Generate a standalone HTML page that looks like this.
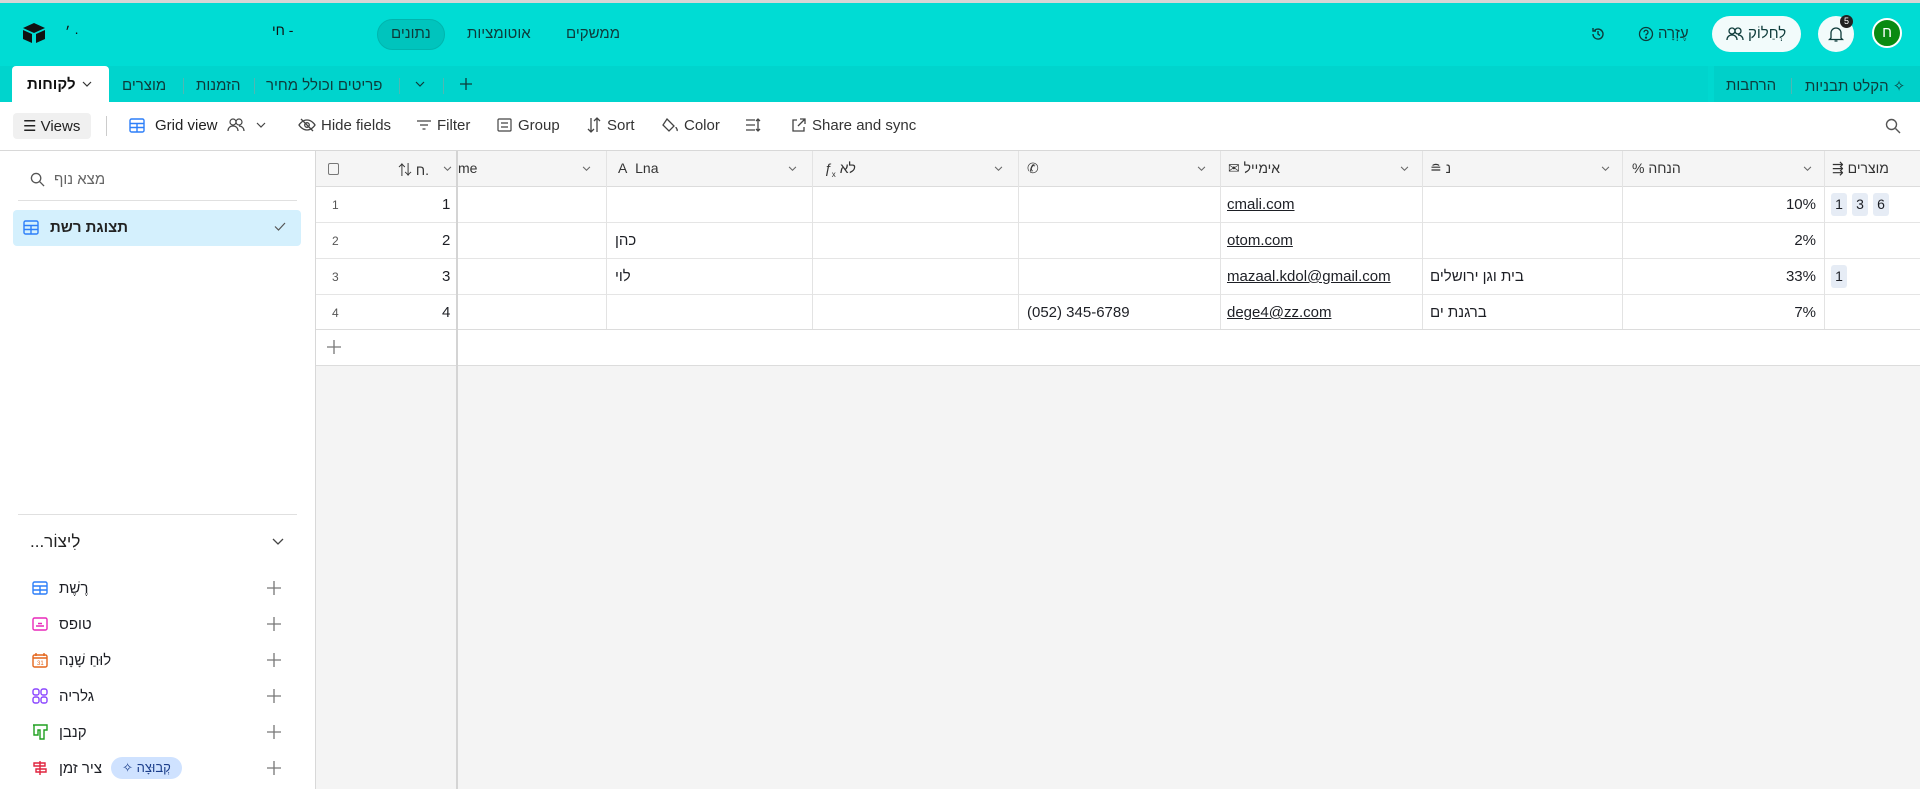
<!DOCTYPE html>
<html><head><meta charset="utf-8">
<style>
*{box-sizing:border-box;margin:0;padding:0}
body{width:1920px;height:789px;overflow:hidden;position:relative;background:#fff;font-family:"Liberation Sans","Noto Sans CJK SC",sans-serif;color:#1d1f25;font-size:15px}
.a{position:absolute;white-space:nowrap}
.top{left:0;top:0;width:1920px;height:66px;background:#00dcd4;border-top:3px solid #d6d6d6}
.tabs{left:0;top:66px;width:1920px;height:36px;background:#00d4cd}
.vl{position:absolute;width:1px;background:#dcdcdc}
.hl{position:absolute;height:1px;background:#dcdcdc}
.tb{top:117px;font-size:15px;color:#333}
.hd{top:160px;font-size:14px;color:#333}
.cell{font-size:15px}
.r{text-align:right;width:60px}
svg{position:absolute}
</style></head><body>
<div class="a top"></div>
<div class="a tabs"></div>
<div class="a" style="left:1708px;top:66px;width:212px;height:36px;background:#00d0c9;border-left:6px solid #00d8d0"></div>
<svg style="left:22px;top:22px" width="24" height="22" viewBox="0 0 24 22"><path d="M12 1L23 6 12 11 1 6Z" fill="#111"/><path d="M1 8L10 12V21L1 17Z" fill="#111"/><path d="M14 12L23 8V17L14 21Z" fill="#111"/></svg>
<div class="a" style="left:65px;top:24px;color:#111;font-size:14px">׳ ·</div>
<div class="a" style="left:272px;top:22px;color:#111;font-size:14px">חי -</div>
<div class="a" style="left:377px;top:19px;width:68px;height:31px;border-radius:16px;background:#00c4bd;border:1px solid #00b5ae"></div>
<div class="a" style="left:391px;top:25px;font-size:15px;color:#0d3b3a">נתונים</div>
<div class="a" style="left:467px;top:25px;font-size:15px;color:#0d3b3a">אוטומציות</div>
<div class="a" style="left:566px;top:25px;font-size:15px;color:#0d3b3a">ממשקים</div>
<svg style="left:1590px;top:26px" width="16" height="16" viewBox="0 0 16 16" fill="none" stroke="#0d3b3a" stroke-width="1.4"><path d="M3 8a5 5 0 1 0 1.5-3.5M3 2v3h3M8 5v3l2 1.5"/></svg>
<svg style="left:1638px;top:26px" width="16" height="16" viewBox="0 0 16 16" fill="none" stroke="#0d3b3a" stroke-width="1.3"><circle cx="8" cy="8" r="6.5"/><path d="M6 6.3a2 2 0 1 1 2.5 1.9c-.5.2-.5.6-.5 1.3"/><circle cx="8" cy="11.6" r=".5" fill="#0d3b3a"/></svg>
<div class="a" style="left:1658px;top:25px;font-size:15px;color:#0d3b3a">עֶזְרָה</div>
<div class="a" style="left:1712px;top:16px;width:89px;height:36px;border-radius:18px;background:#f2fbfb"></div>
<svg style="left:1726px;top:27px" width="18" height="14" viewBox="0 0 18 14" fill="none" stroke="#0d3b3a" stroke-width="1.3"><circle cx="6" cy="4" r="3"/><circle cx="12" cy="4" r="3"/><path d="M1 13c0-3 2-5 5-5s5 2 5 5M12 8c3 0 5 2 5 5"/></svg>
<div class="a" style="left:1748px;top:25px;font-size:15px;color:#0d3b3a">לְחַלוֹק</div>
<div class="a" style="left:1818px;top:16px;width:36px;height:36px;border-radius:18px;background:#f2fbfb"></div>
<svg style="left:1828px;top:25px" width="16" height="18" viewBox="0 0 16 18" fill="none" stroke="#0d3b3a" stroke-width="1.3"><path d="M3 13V8a5 5 0 0 1 10 0v5l1.5 1.5h-13ZM6.5 16h3"/></svg>
<div class="a" style="left:1840px;top:15px;width:13px;height:13px;border-radius:7px;background:#222;color:#fff;font-size:9px;text-align:center;line-height:13px">5</div>
<div class="a" style="left:1872px;top:18px;width:30px;height:30px;border-radius:15px;background:#0a8a12;border:2px solid #fff;color:#fff;font-size:15px;text-align:center;line-height:26px">ח</div>
<div class="a" style="left:12px;top:66px;width:97px;height:36px;background:#fff;border-radius:4px 4px 0 0"></div>
<div class="a" style="left:27px;top:76px;font-size:15px;font-weight:bold;color:#111">לקוחות</div>
<svg style="left:82px;top:81px" width="10" height="7" viewBox="0 0 10 7" fill="none" stroke="#333" stroke-width="1.2"><path d="M1 1l4 4 4-4"/></svg>
<div class="a" style="left:122px;top:77px;font-size:15px;color:#0d3b3a">מוצרים</div>
<div class="a" style="left:183px;top:78px;width:1px;height:16px;background:#4fb8b3"></div>
<div class="a" style="left:196px;top:77px;font-size:15px;color:#0d3b3a">הזמנות</div>
<div class="a" style="left:254px;top:78px;width:1px;height:16px;background:#4fb8b3"></div>
<div class="a" style="left:266px;top:77px;font-size:15px;color:#0d3b3a">פריטים וכולל מחיר</div>
<div class="a" style="left:399px;top:78px;width:1px;height:16px;background:#4fb8b3"></div>
<svg style="left:415px;top:81px" width="10" height="7" viewBox="0 0 10 7" fill="none" stroke="#0d3b3a" stroke-width="1.2"><path d="M1 1l4 4 4-4"/></svg>
<div class="a" style="left:443px;top:78px;width:1px;height:16px;background:#4fb8b3"></div>
<svg style="left:459px;top:77px" width="14" height="14" viewBox="0 0 14 14" stroke="#0d3b3a" stroke-width="1.3"><path d="M7 1v12M1 7h12"/></svg>
<div class="a" style="left:1726px;top:77px;font-size:15px;color:#0d3b3a">הרחבות</div>
<div class="a" style="left:1791px;top:78px;width:1px;height:16px;background:#4fb8b3"></div>
<div class="a" style="left:1805px;top:77px;font-size:15px;color:#0d3b3a">הקלט תבניות ✧</div>
<div class="a" style="left:0;top:150px;width:1920px;height:1px;background:#d8d8d8"></div>
<div class="a" style="left:13px;top:113px;width:78px;height:26px;border-radius:4px;background:#f0f0f0"></div>
<div class="a tb" style="left:23px;color:#222">☰ Views</div>
<div class="a" style="left:106px;top:116px;width:1px;height:20px;background:#ccc"></div>
<svg style="left:129px;top:118px" width="16" height="15" viewBox="0 0 16 15" fill="none" stroke="#2d7ff9" stroke-width="1.4"><rect x="1" y="1" width="14" height="13" rx="1.5"/><path d="M1 5.5h14M1 9.5h14M8 5.5v8.5"/></svg>
<div class="a tb" style="left:155px;color:#222">Grid view</div>
<svg style="left:227px;top:118px" width="18" height="14" viewBox="0 0 18 14" fill="none" stroke="#444" stroke-width="1.2"><circle cx="6" cy="4" r="3"/><circle cx="12" cy="4" r="3"/><path d="M1 13c0-3 2-5 5-5s5 2 5 5M12 8c3 0 5 2 5 5"/></svg>
<svg style="left:256px;top:122px" width="10" height="7" viewBox="0 0 10 7" fill="none" stroke="#444" stroke-width="1.2"><path d="M1 1l4 4 4-4"/></svg>
<svg style="left:298px;top:118px" width="18" height="14" viewBox="0 0 18 14" fill="none" stroke="#444" stroke-width="1.3"><path d="M1 7s3-5 8-5 8 5 8 5-3 5-8 5-8-5-8-5Z"/><circle cx="9" cy="7" r="2.3"/><path d="M3 1l12 12"/></svg>
<div class="a tb" style="left:321px">Hide fields</div>
<svg style="left:416px;top:119px" width="16" height="12" viewBox="0 0 16 12" stroke="#444" stroke-width="1.3"><path d="M1 2h14M4 6h8M6.5 10h3"/></svg>
<div class="a tb" style="left:437px">Filter</div>
<svg style="left:497px;top:118px" width="15" height="14" viewBox="0 0 15 14" fill="none" stroke="#444" stroke-width="1.2"><rect x="1" y="1" width="13" height="12" rx="1"/><path d="M4 5h7M4 9h7"/></svg>
<div class="a tb" style="left:518px">Group</div>
<svg style="left:587px;top:117px" width="14" height="16" viewBox="0 0 14 16" fill="none" stroke="#444" stroke-width="1.3"><path d="M4 1v14M1 12l3 3 3-3M10 15V1M7 4l3-3 3 3"/></svg>
<div class="a tb" style="left:607px">Sort</div>
<svg style="left:661px;top:117px" width="18" height="16" viewBox="0 0 18 16" fill="none" stroke="#444" stroke-width="1.3"><path d="M6 2l7 7-5 5-6-6Z"/><path d="M15 10c0 2 2 2 1 4"/></svg>
<div class="a tb" style="left:684px">Color</div>
<svg style="left:745px;top:118px" width="16" height="14" viewBox="0 0 16 14" stroke="#444" stroke-width="1.3" fill="none"><path d="M1 2h9M1 7h9M1 12h9M13 1v12M11 3l2-2 2 2M11 11l2 2 2-2"/></svg>
<svg style="left:791px;top:118px" width="15" height="15" viewBox="0 0 15 15" fill="none" stroke="#444" stroke-width="1.3"><path d="M6 2H2v11h11V9M9 1h5v5M14 1L7 8"/></svg>
<div class="a tb" style="left:812px">Share and sync</div>
<svg style="left:1885px;top:118px" width="16" height="16" viewBox="0 0 16 16" fill="none" stroke="#555" stroke-width="1.4"><circle cx="6.5" cy="6.5" r="5"/><path d="M10.5 10.5L15 15"/></svg>
<div class="a" style="left:315px;top:151px;width:1px;height:638px;background:#d8d8d8"></div>
<svg style="left:30px;top:172px" width="15" height="15" viewBox="0 0 16 16" fill="none" stroke="#555" stroke-width="1.4"><circle cx="6.5" cy="6.5" r="5"/><path d="M10.5 10.5L15 15"/></svg>
<div class="a" style="left:54px;top:171px;font-size:15px;color:#666">מצא נוף</div>
<div class="a" style="left:18px;top:200px;width:279px;height:1px;background:#e0e0e0"></div>
<div class="a" style="left:13px;top:210px;width:288px;height:36px;border-radius:4px;background:#d4f0fd"></div>
<svg style="left:23px;top:220px" width="16" height="15" viewBox="0 0 16 15" fill="none" stroke="#2d7ff9" stroke-width="1.4"><rect x="1" y="1" width="14" height="13" rx="1.5"/><path d="M1 5.5h14M1 9.5h14M8 5.5v8.5"/></svg>
<div class="a" style="left:50px;top:219px;font-size:15px;font-weight:bold;color:#222">תצוגת רשת</div>
<svg style="left:274px;top:222px" width="12" height="9" viewBox="0 0 12 9" fill="none" stroke="#555" stroke-width="1.2"><path d="M1 4.5l3.5 3.5L11 1"/></svg>
<div class="a" style="left:18px;top:514px;width:279px;height:1px;background:#e0e0e0"></div>
<div class="a" style="left:30px;top:532px;font-size:17px;color:#222">...לִיצוֹר</div>
<svg style="left:272px;top:538px" width="12" height="8" viewBox="0 0 12 8" fill="none" stroke="#444" stroke-width="1.3"><path d="M1 1l5 5 5-5"/></svg>
<svg style="left:32px;top:581px" width="16" height="14" viewBox="0 0 16 14" fill="none" stroke="#2d7ff9" stroke-width="1.4"><rect x="1" y="1" width="14" height="12" rx="1.5"/><path d="M1 5h14M1 9h14M8 5v8"/></svg>
<div class="a" style="left:59px;top:580px;font-size:15px">רֶשֶׁת</div>
<svg style="left:32px;top:617px" width="16" height="14" viewBox="0 0 16 14" fill="none" stroke="#e929ba" stroke-width="1.4"><rect x="1" y="1" width="14" height="12" rx="1.5"/><path d="M4 9h8M6 6.5h4"/></svg>
<div class="a" style="left:59px;top:616px;font-size:15px">טופס</div>
<svg style="left:32px;top:652px" width="16" height="16" viewBox="0 0 16 16" fill="none" stroke="#e4661c" stroke-width="1.4"><rect x="1" y="3" width="14" height="12" rx="1.5"/><path d="M4 1v3M12 1v3M1 6h14"/><text x="5" y="13" font-size="6" fill="#e4661c" stroke="none">31</text></svg>
<div class="a" style="left:59px;top:652px;font-size:15px">לוּחַ שָׁנָה</div>
<svg style="left:32px;top:688px" width="16" height="16" viewBox="0 0 16 16" fill="none" stroke="#8b46ff" stroke-width="1.4"><rect x="1" y="1" width="6" height="6" rx="2"/><rect x="9" y="1" width="6" height="6" rx="2"/><rect x="1" y="9" width="6" height="6" rx="2"/><rect x="9" y="9" width="6" height="6" rx="2"/></svg>
<div class="a" style="left:59px;top:688px;font-size:15px">גלריה</div>
<svg style="left:32px;top:724px" width="16" height="16" viewBox="0 0 16 16" fill="none" stroke="#20a020" stroke-width="1.4"><path d="M1 1h14v5h-3v9H8V6H6v5H2V1"/></svg>
<div class="a" style="left:59px;top:724px;font-size:15px">קנבן</div>
<svg style="left:32px;top:760px" width="16" height="16" viewBox="0 0 16 16" fill="none" stroke="#e0243f" stroke-width="1.4"><path d="M8 1v14M2 3h11v3H2ZM4 9h10v3H4Z"/></svg>
<div class="a" style="left:59px;top:760px;font-size:15px">ציר זמן</div>
<div class="a" style="left:111px;top:757px;width:71px;height:22px;border-radius:11px;background:#cfe2ff;color:#1a3d8a;font-size:13px;text-align:center;line-height:22px">✧ קְבוּצָה</div>
<svg style="left:267px;top:581px" width="14" height="200" viewBox="0 0 14 200" stroke="#777" stroke-width="1.3"><path d="M7 0v14M0 7h14M7 36v14M0 43h14M7 72v14M0 79h14M7 108v14M0 115h14M7 144v14M0 151h14M7 180v14M0 187h14"/></svg>
<div class="a" style="left:316px;top:151px;width:1604px;height:36px;background:#f5f5f5"></div>
<div class="a" style="left:316px;top:365px;width:1604px;height:424px;background:#f4f4f4"></div>
<div class="hl" style="left:316px;top:186px;width:1604px"></div>
<div class="hl" style="left:316px;top:222px;width:1604px;background:#e5e5e5"></div>
<div class="hl" style="left:316px;top:258px;width:1604px;background:#e5e5e5"></div>
<div class="hl" style="left:316px;top:294px;width:1604px;background:#e5e5e5"></div>
<div class="hl" style="left:316px;top:329px;width:1604px;background:#dcdcdc"></div>
<div class="hl" style="left:316px;top:365px;width:1604px;background:#dcdcdc"></div>
<div class="vl" style="left:456px;top:151px;height:638px;width:2px;background:#d4d4d4"></div>
<div class="vl" style="left:606px;top:151px;height:178px;background:#e3e3e3"></div>
<div class="vl" style="left:812px;top:151px;height:178px;background:#e3e3e3"></div>
<div class="vl" style="left:1018px;top:151px;height:178px;background:#e3e3e3"></div>
<div class="vl" style="left:1220px;top:151px;height:178px;background:#e3e3e3"></div>
<div class="vl" style="left:1422px;top:151px;height:178px;background:#e3e3e3"></div>
<div class="vl" style="left:1622px;top:151px;height:178px;background:#e3e3e3"></div>
<div class="vl" style="left:1824px;top:151px;height:178px;background:#e3e3e3"></div>
<div class="a" style="left:328px;top:163px;width:11px;height:12px;border:1px solid #777;border-radius:2px"></div>
<div class="a hd" style="left:398px">⇅ ח.</div>
<svg style="left:443px;top:166px" width="9" height="6" viewBox="0 0 10 7" fill="none" stroke="#666" stroke-width="1.2"><path d="M1 1l4 4 4-4"/></svg>
<div class="a hd" style="left:458px">me</div>
<div class="a hd" style="left:618px">A&nbsp; Lna</div>
<div class="a hd" style="left:824px"><i>ƒ</i><sub style="font-size:8px">x</sub> לא</div>
<div class="a hd" style="left:1027px">✆</div>
<div class="a hd" style="left:1228px">✉ אימייל</div>
<div class="a hd" style="left:1430px">≘ נ</div>
<div class="a hd" style="left:1632px">% &#x200E;הנחה</div>
<div class="a hd" style="left:1832px">⇶ מוצרים</div>
<svg style="left:582px;top:166px" width="9" height="6" viewBox="0 0 10 7" fill="none" stroke="#666" stroke-width="1.2"><path d="M1 1l4 4 4-4"/></svg>
<svg style="left:788px;top:166px" width="9" height="6" viewBox="0 0 10 7" fill="none" stroke="#666" stroke-width="1.2"><path d="M1 1l4 4 4-4"/></svg>
<svg style="left:994px;top:166px" width="9" height="6" viewBox="0 0 10 7" fill="none" stroke="#666" stroke-width="1.2"><path d="M1 1l4 4 4-4"/></svg>
<svg style="left:1197px;top:166px" width="9" height="6" viewBox="0 0 10 7" fill="none" stroke="#666" stroke-width="1.2"><path d="M1 1l4 4 4-4"/></svg>
<svg style="left:1400px;top:166px" width="9" height="6" viewBox="0 0 10 7" fill="none" stroke="#666" stroke-width="1.2"><path d="M1 1l4 4 4-4"/></svg>
<svg style="left:1601px;top:166px" width="9" height="6" viewBox="0 0 10 7" fill="none" stroke="#666" stroke-width="1.2"><path d="M1 1l4 4 4-4"/></svg>
<svg style="left:1803px;top:166px" width="9" height="6" viewBox="0 0 10 7" fill="none" stroke="#666" stroke-width="1.2"><path d="M1 1l4 4 4-4"/></svg>
<div class="a" style="left:332px;top:198px;font-size:12px;color:#555">1</div>
<div class="a" style="left:332px;top:234px;font-size:12px;color:#555">2</div>
<div class="a" style="left:332px;top:270px;font-size:12px;color:#555">3</div>
<div class="a" style="left:332px;top:306px;font-size:12px;color:#555">4</div>
<div class="a cell" style="left:442px;top:196px">1</div>
<div class="a cell" style="left:442px;top:232px">2</div>
<div class="a cell" style="left:442px;top:268px">3</div>
<div class="a cell" style="left:442px;top:304px">4</div>
<div class="a cell" style="left:615px;top:232px">כהן</div>
<div class="a cell" style="left:615px;top:268px">לוי</div>
<div class="a cell" style="left:1027px;top:304px">(052) 345-6789</div>
<div class="a cell" style="left:1227px;top:196px;text-decoration:underline">cmali.com</div>
<div class="a cell" style="left:1227px;top:232px;text-decoration:underline">otom.com</div>
<div class="a cell" style="left:1227px;top:268px;text-decoration:underline">mazaal.kdol@gmail.com</div>
<div class="a cell" style="left:1227px;top:304px;text-decoration:underline">dege4@zz.com</div>
<div class="a cell" style="left:1430px;top:268px">בית וגן ירושלים</div>
<div class="a cell" style="left:1430px;top:304px">ברגנת ים</div>
<div class="a cell r" style="left:1756px;top:196px">10%</div>
<div class="a cell r" style="left:1756px;top:232px">2%</div>
<div class="a cell r" style="left:1756px;top:268px">33%</div>
<div class="a cell r" style="left:1756px;top:304px">7%</div>
<div class="a" style="left:1831px;top:193px;width:16px;height:23px;border-radius:3px;background:#e6ecf5;text-align:center;line-height:23px;font-size:14px">1</div>
<div class="a" style="left:1852px;top:193px;width:16px;height:23px;border-radius:3px;background:#e6ecf5;text-align:center;line-height:23px;font-size:14px">3</div>
<div class="a" style="left:1873px;top:193px;width:16px;height:23px;border-radius:3px;background:#e6ecf5;text-align:center;line-height:23px;font-size:14px">6</div>
<div class="a" style="left:1831px;top:265px;width:16px;height:23px;border-radius:3px;background:#e6ecf5;text-align:center;line-height:23px;font-size:14px">1</div>
<svg style="left:327px;top:340px" width="14" height="14" viewBox="0 0 14 14" stroke="#777" stroke-width="1.3"><path d="M7 0v14M0 7h14"/></svg>
</body></html>
